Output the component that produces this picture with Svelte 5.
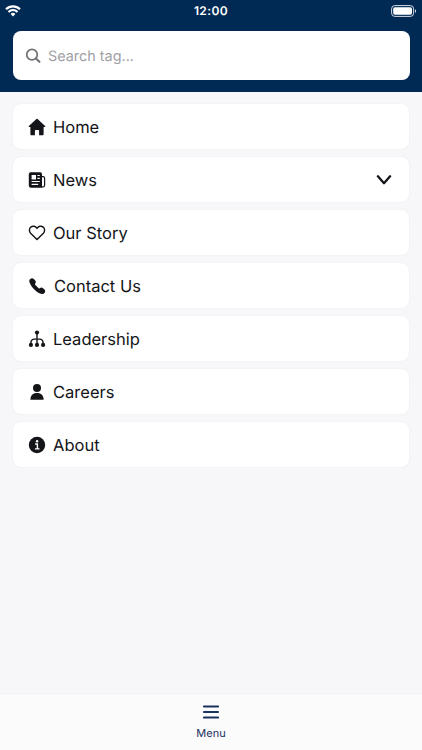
<script>
	let search = "";
	let newsOpen = false;

	const items = [
		{ icon: "home", label: "Home" },
		{ icon: "news", label: "News", expandable: true },
		{ icon: "heart", label: "Our Story" },
		{ icon: "phone", label: "Contact Us" },
		{ icon: "tree", label: "Leadership" },
		{ icon: "person", label: "Careers" },
		{ icon: "info", label: "About" },
	];
</script>

<div class="screen">
	<header>
		<div class="status-bar">
			<svg class="wifi" viewBox="0 0 16 12" width="16" height="12">
				<g fill="none" stroke="#fff" stroke-width="2.1">
					<path d="M1 4.2a10 10 0 0 1 14 0" />
					<path d="M3.5 6.9a6.4 6.4 0 0 1 9 0" />
				</g>
				<path d="M8 11.4 5.6 9a3.4 3.4 0 0 1 4.8 0z" fill="#fff" />
			</svg>
			<span class="time">12:00</span>
			<svg class="battery" viewBox="0 0 26 12" width="26" height="12">
				<rect x="0.6" y="0.6" width="22" height="10.8" rx="3.2" fill="none" stroke="#d5dce5" stroke-width="1" />
				<rect x="2.2" y="2.2" width="18.8" height="7.6" rx="1.8" fill="#fff" />
				<path d="M24 4.2c1.5.5 1.5 3.1 0 3.6z" fill="#d5dce5" />
			</svg>
		</div>
		<label class="search">
			<svg viewBox="0 0 16 16" width="16" height="16" fill="none" stroke="#737477">
				<circle cx="7" cy="6.6" r="5.3" stroke-width="1.8" />
				<path d="m10.9 10.5 3.5 3.3" stroke-width="2.2" stroke-linecap="round" />
			</svg>
			<input type="text" bind:value={search} placeholder="Search tag..." />
		</label>
	</header>

	<nav class="menu-list">
		{#each items as item}
			<button class="item" class:phone={item.icon === "phone"} on:click={() => item.expandable && (newsOpen = !newsOpen)}>
				<svg class="icon" viewBox="0 0 18 18" width="18" height="18">
					{#if item.icon === "home"}
						<path d="M8.4 1.1q.6-.5 1.2 0l7.5 6.8c.5.5.2 1.2-.4 1.2h-1.1v7.4q0 .7-.7.7h-3.8v-4.6q0-.7-.7-.7H7.6q-.7 0-.7.7v4.6H3.1q-.7 0-.7-.7V9.1H1.3c-.6 0-.9-.7-.4-1.2z" />
					{:else if item.icon === "news"}
						<path fill-rule="evenodd" d="M2.8 1.2h9.4a1.8 1.8 0 0 1 1.8 1.8v13.7H3.1A2.3 2.3 0 0 1 .8 14.4V3.2a2 2 0 0 1 2-2zM3.6 4v4.4H8V4zM9.4 4v1.1h2.4V4zM9.4 6.7v1.2h2.4V6.7zM3.6 10v1.1h8.2V10zM3.6 12.8v1.1h6.6v-1.1z" />
						<path d="M13.3 5.7h1.8q1.5 0 1.5 1.5v7.1a1.7 1.7 0 0 1-3.4 0" fill="none" stroke="#141518" stroke-width="1.2" />
					{:else if item.icon === "heart"}
						<path d="M9 15.5 2.6 9.2C.9 7.4 1.1 4.6 2.8 3.1 4.8 1.5 7.4 2.1 9 4.4c1.6-2.3 4.2-2.9 6.2-1.3 1.7 1.5 1.9 4.3.2 6.1z" fill="none" stroke="#141518" stroke-width="1.4" stroke-linejoin="round" />
					{:else if item.icon === "phone"}
						<path d="M2.2 2c1-1 2.6-1 3.6-.1l1.4 1.5c.9.9.8 2.3 0 3.1-.4.5-.3.9.2 1.5l3 3c.6.5 1 .6 1.5.2.8-.8 2.2-.9 3.1 0l1.5 1.3c.9 1 .9 2.5 0 3.5-1.7 1.7-5 .8-8-1.6-3-2.3-5.5-5.1-6.7-8.3C1 4.4 1.1 3.1 2.2 2z" />
					{:else if item.icon === "tree"}
						<circle cx="9" cy="2.6" r="2.1" />
						<circle cx="2.9" cy="14.9" r="2.1" />
						<circle cx="9" cy="14.9" r="2.1" />
						<circle cx="15.1" cy="14.9" r="2.1" />
						<path d="M9 3v11M2.9 14v-1.1c0-2.4 1.2-3.8 3.6-3.8h5c2.4 0 3.6 1.4 3.6 3.8V14" fill="none" stroke="#141518" stroke-width="1.4" />
					{:else if item.icon === "person"}
						<circle cx="9" cy="4.9" r="4" />
						<path d="M2.4 16.7c0-4.1 2.4-6.7 6.6-6.7s6.6 2.6 6.6 6.7z" />
					{:else}
						<circle cx="9" cy="9" r="8.2" />
						<circle cx="9.1" cy="5.2" r="1.2" fill="#fff" />
						<path d="M7.1 8h2.3v4.8M6.9 12.9h4.6" fill="none" stroke="#fff" stroke-width="1.4" />
					{/if}
				</svg>
				<span class="label">{item.label}</span>
				{#if item.expandable}
					<svg class="chevron" class:open={newsOpen} viewBox="0 0 16 10" width="16" height="10">
						<path d="m1.9 1.3 6.1 6.9 6.1-6.9" fill="none" stroke="#141518" stroke-width="2.3" stroke-linecap="round" stroke-linejoin="round" />
					</svg>
				{/if}
			</button>
		{/each}
	</nav>

	<footer>
		<button class="tab">
			<svg viewBox="0 0 16 14" width="16" height="14">
				<path d="M.9 1.4h14.2M.9 7h14.2M.9 12.6h14.2" stroke="#1b315e" stroke-width="2" stroke-linecap="round" />
			</svg>
			<span>Menu</span>
		</button>
	</footer>
</div>

<style>
	:global(body) {
		background: #f7f7fa;
	}

	.screen {
		display: flex;
		flex-direction: column;
		height: 750px;
		font-family: Inter, "Liberation Sans", sans-serif;
		text-rendering: geometricPrecision;
		color: #141518;
		background: #f7f7fa;
	}

	header {
		box-sizing: border-box;
		height: 92px;
		background: #002a54;
	}

	.status-bar {
		display: grid;
		grid-template-columns: 1fr auto 1fr;
		align-items: center;
		box-sizing: border-box;
		height: 22px;
		padding: 0 5px 1px 5px;
	}

	.time {
		font-size: 12px;
		font-weight: 600;
		line-height: 14px;
		letter-spacing: 0.4px;
		color: #fff;
	}

	.battery {
		justify-self: end;
	}

	.search {
		display: flex;
		align-items: center;
		box-sizing: border-box;
		height: 49px;
		margin: 9px 12.5px 0;
		padding: 0 12px;
		border-radius: 8px;
		background: #fff;
	}

	.search input {
		flex: 1;
		min-width: 0;
		margin-left: 7.5px;
		padding: 2px 0 0;
		border: none;
		outline: none;
		font: 14.4px Inter, "Liberation Sans", sans-serif;
		text-rendering: geometricPrecision;
		color: #141518;
	}

	.search input::placeholder {
		color: #a0a0a5;
	}

	.menu-list {
		display: flex;
		flex: 1;
		flex-direction: column;
		gap: 6px;
		padding: 11px 12px;
	}

	.item {
		display: flex;
		align-items: center;
		box-sizing: border-box;
		height: 47px;
		padding: 1px 17px 0 15px;
		border: 1px solid #f3f3f5;
		border-radius: 9px;
		font: inherit;
		text-rendering: inherit;
		color: inherit;
		background: #fff;
	}

	.icon {
		margin-right: 7px;
		fill: #141518;
	}

	.phone .icon {
		margin-right: 8px;
	}

	.label {
		font-size: 16.5px;
		line-height: 20px;
	}

	.chevron {
		margin-left: auto;
	}

	.chevron.open {
		transform: rotate(180deg);
	}

	footer {
		display: flex;
		justify-content: center;
		box-sizing: border-box;
		height: 57px;
		border-top: 1px solid #f2f2f5;
		background: #fbfbfb;
	}

	.tab {
		display: flex;
		flex-direction: column;
		align-items: center;
		gap: 7px;
		padding: 11px 12px 0;
		border: none;
		font: 11px/14px Inter, "Liberation Sans", sans-serif;
		text-rendering: inherit;
		color: #1b315e;
		background: none;
	}
</style>
